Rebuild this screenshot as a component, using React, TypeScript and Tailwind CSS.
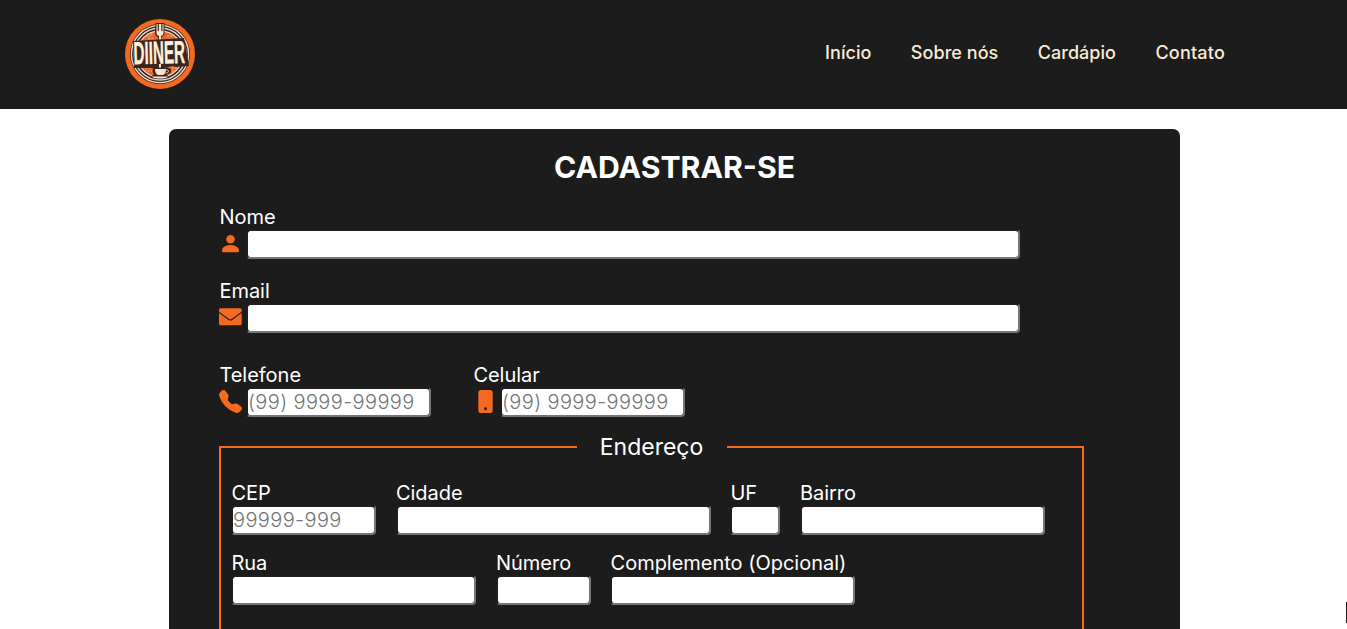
import React from "react";
import { BsPersonFill, BsTelephoneFill, BsPhoneFill } from "react-icons/bs";

function Logo() {
  return (
    <svg viewBox="0 0 70 70" className="mb-[2px] block size-[70px] overflow-visible" role="img" aria-label="Diiner">
      <circle cx="35" cy="35" r="35" fill="#f3691f" />
      <circle cx="35" cy="35" r="30" fill="#3b2420" />
      <circle cx="35" cy="35" r="28.6" fill="none" stroke="#f5e3cf" strokeWidth="1.3" />
      <circle cx="35" cy="35" r="26" fill="none" stroke="#e9d6c4" strokeWidth="1.4" />
      <circle cx="35" cy="35" r="23.8" fill="#f5e3cf" />
      <circle cx="35" cy="35" r="22.6" fill="#e8662a" />
      <g stroke="#f3b48a" strokeWidth="1" fill="none" strokeDasharray="2 1.4">
        <path d="M22 15h6M21 17h7M23 19.500h6M42 17h5M43 20h5M17 49h9M19 52h8M43 49h9M43 52h7" />
      </g>
      <path d="M30.500 4h9v9q0 4-3 5v6h-3.500v-6q-3-1-3-5z" fill="#3b2420" />
      <path d="M31.500 5v9q0 2.500 2.500 3v5h2v-5q2.500-.5 2.500-3V5h-1v7h-1.200V5h-2.400v7h-1.200V5z" fill="#f5e3cf" />
      <path d="M8 22 59 19l5 28-13 1-3-1-9 2H20l-11 0z" fill="#3b2420" />
      <g transform="translate(8.800 45.300) rotate(-1.500) scale(.475 1)">
        <text
          className="font-['Liberation_Sans',sans-serif] text-[32px] font-bold"
          fill="#fff0d9"
          stroke="#fff0d9"
          strokeWidth=".4"
        >
          DIINER
        </text>
      </g>
      <path d="M34 45h2v4h-2z" fill="#f5e3cf" />
      <path d="M28 48.500h15q4 1 3 4-1 3-5 3 3 1 2 3H26q0-2 3-3-2-2-1-7z" fill="#3b2420" />
      <path d="M30 50h11q0 5-3 6h-5q-3-1-3-6zM26.500 57.500h17q-2 2-6 2h-5q-4 0-6-2z" fill="#f5e3cf" />
      <path d="M41 51q3-.5 2.500 1.500t-3 1.500" fill="none" stroke="#f5e3cf" strokeWidth=".8" />
    </svg>
  );
}

function EnvelopeIcon() {
  return (
    <svg viewBox="0 0 23 23" className="block size-[23px]">
      <rect x="0" y="2.300" width="22.700" height="16.900" rx="1.500" fill="currentColor" />
      <path d="M-.5 6 9.800 13.500q1.550 1.050 3.100 0L23.200 6" fill="none" stroke="#1c1c1c" strokeWidth="1.100" />
    </svg>
  );
}

interface FieldProps {
  label: string;
  width: string;
  icon?: React.ReactNode;
  placeholder?: string;
}

function Field({ label, width, icon, placeholder }: FieldProps) {
  return (
    <label className="flex flex-col text-[20px] leading-[24px] text-white">
      <span className="pl-[0.4px] tracking-[-0.02px] whitespace-nowrap">{label}</span>
      <span className="flex items-start">
        {icon && <span className="mt-[3px] w-[27px] text-[23px] text-[#f56920]">{icon}</span>}
        <input
          placeholder={placeholder}
          className={`box-border h-[30px] rounded-[4px] border-2 border-t-[#1f1f1f] border-l-[#1f1f1f] border-r-[#767676] border-b-[#767676] bg-white bg-clip-padding p-0 text-[20px] leading-[24px] font-light tracking-[0.38px] text-black outline-none placeholder:text-[#757575] ${width}`}
        />
      </span>
    </label>
  );
}

export default function App() {
  return (
    <div className="relative h-[629px] overflow-hidden bg-white font-[Inter,sans-serif]">
      <header className="flex h-[109px] items-center justify-between bg-[#1c1c1c] pr-[122px] pl-[125px]">
        <Logo />
        <nav className="flex gap-[39.4px] pb-[5px] text-[18px] font-medium tracking-[0.05px] text-[#faebd7]">
          <a>Início</a>
          <a>Sobre nós</a>
          <a>Cardápio</a>
          <a className="tracking-[0.2px]">Contato</a>
        </nav>
      </header>
      <main className="mt-5 ml-[169px] h-[700px] w-[1011px] rounded-[7px] bg-[#1c1c1c] px-[50px] pt-[19px]">
        <h1 className="text-center text-[30.2px] leading-[39px] font-bold text-white">CADASTRAR-SE</h1>
        <form className="mt-[18px]">
          <Field label="Nome" width="w-[774px]" icon={<BsPersonFill />} />
          <div className="mt-5">
            <Field label="Email" width="w-[774px]" icon={<EnvelopeIcon />} />
          </div>
          <div className="mt-[30px] flex gap-[42px]">
            <Field label="Telefone" width="w-[185px]" icon={<BsTelephoneFill />} placeholder="(99) 9999-99999" />
            <Field label="Celular" width="w-[185px]" icon={<BsPhoneFill className="ml-[0.6px]" />} placeholder="(99) 9999-99999" />
          </div>
          <fieldset className="mt-[15px] h-[400px] w-[865px] border-2 border-[#f86a1e] px-[10px]">
            <legend className="mx-auto h-[29px] w-[150px] text-center text-[23px] leading-[31px] text-white">Endereço</legend>
            <div className="mt-[20px] flex gap-[19.5px]">
              <Field label="CEP" width="w-[145px]" placeholder="99999-999" />
              <Field label="Cidade" width="w-[315px]" />
              <Field label="UF" width="w-[50px]" />
              <Field label="Bairro" width="w-[245px]" />
            </div>
            <div className="mt-4 flex gap-[19.6px]">
              <Field label="Rua" width="w-[245px]" />
              <Field label="Número" width="w-[95px]" />
              <Field label="Complemento (Opcional)" width="w-[245px]" />
            </div>
          </fieldset>
        </form>
      </main>
      <span className="absolute top-[602px] right-0 h-[21px] w-px bg-[#1c1c1c]" />
    </div>
  );
}
